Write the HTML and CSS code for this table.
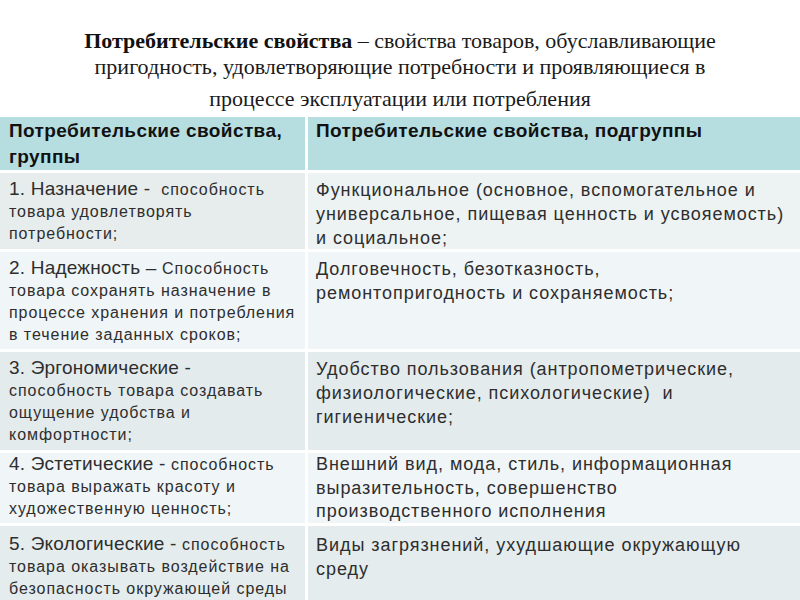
FILE: index.html
```html
<!DOCTYPE html>
<html lang="ru">
<head>
<meta charset="utf-8">
<link rel="stylesheet" href="styles.css">
</head>
<body>
<div class="page">
  <div class="title">
    <p class="title-main"><b>Потребительские свойства</b> – свойства товаров, обуславливающие<br>пригодность, удовлетворяющие потребности и проявляющиеся в</p>
    <p class="title-last">процессе эксплуатации или потребления</p>
  </div>
  <div class="table">
    <div class="cell head left">Потребительские свойства, группы</div>
    <div class="cell head right">Потребительские свойства, подгруппы</div>

    <div class="cell r1 left"><span class="big">1. Назначение -&nbsp; </span>способность товара удовлетворять потребности;</div>
    <div class="cell r1 right">Функциональное (основное, вспомогательное и универсальное, пищевая ценность и усвояемость) и социальное;</div>

    <div class="cell r2 left"><span class="big">2. Надежность – </span>Способность товара сохранять назначение в процессе хранения и потребления в течение заданных сроков;</div>
    <div class="cell r2 right">Долговечность, безотказность, ремонтопригодность и сохраняемость;</div>

    <div class="cell r3 left"><span class="big">3. Эргономические -</span><br>способность товара создавать ощущение удобства и комфортности;</div>
    <div class="cell r3 right">Удобство пользования (антропометрические, физиологические, психологические)&nbsp; и гигиенические;</div>

    <div class="cell r4 left"><span class="big">4. Эстетические - </span>способность товара выражать красоту и художественную ценность;</div>
    <div class="cell r4 right">Внешний вид, мода, стиль, информационная выразительность, совершенство производственного исполнения</div>

    <div class="cell r5 left"><span class="big">5. Экологические - </span>способность товара оказывать воздействие на безопасность окружающей среды</div>
    <div class="cell r5 right">Виды загрязнений, ухудшающие окружающую среду</div>
  </div>
</div>
</body>
</html>
```

FILE: styles.css
```css
html, body {
  margin: 0;
  padding: 0;
  background: #ffffff;
}
.page {
  width: 800px;
  height: 600px;
  overflow: hidden;
}
.title {
  font-family: "Liberation Serif", "Times New Roman", serif;
  font-size: 22px;
  color: #1a1a1a;
  text-align: center;
  padding-top: 28px;
}
.title p {
  margin: 0;
}
.title-main {
  line-height: 26px;
}
.title-last {
  line-height: 26px;
  margin-top: 6px !important;
}
.title b {
  color: #111;
}
.table {
  margin-top: 5px;
  display: grid;
  grid-template-columns: 305px 1fr;
  grid-template-rows: 53px 76px 97px 98px 70px 80px;
  gap: 3px;
  background: #ffffff;
  font-family: "Liberation Sans", Arial, sans-serif;
  color: #2e2e2e;
}
.cell {
  box-sizing: border-box;
  padding: 5px 3px 0 9px;
}
.left {
  font-size: 16px;
  letter-spacing: 0.95px;
  line-height: 22px;
}
.left .big {
  font-size: 19px;
  letter-spacing: 0.2px;
}
.right {
  font-size: 18px;
  letter-spacing: 0.95px;
  line-height: 24px;
  padding-left: 8px;
  padding-right: 12px;
}
.head {
  background: #b6dde0;
  color: #111;
  font-weight: bold;
  font-size: 19px;
  letter-spacing: 0.4px;
  line-height: 26px;
  padding-top: 1px;
}
.r1.left { background: #e7ecec; }
.r1.right { background: #edf2f2; }
.r2 { background: #f0f5f7; }
.r3 { background: #e4ebed; }
.r4 {
  background: #f0f5f7;
  padding-top: 0;
}
.r4.right { line-height: 23.5px; }
.r5 {
  background: #e4eced;
  padding-top: 7px;
}
```
